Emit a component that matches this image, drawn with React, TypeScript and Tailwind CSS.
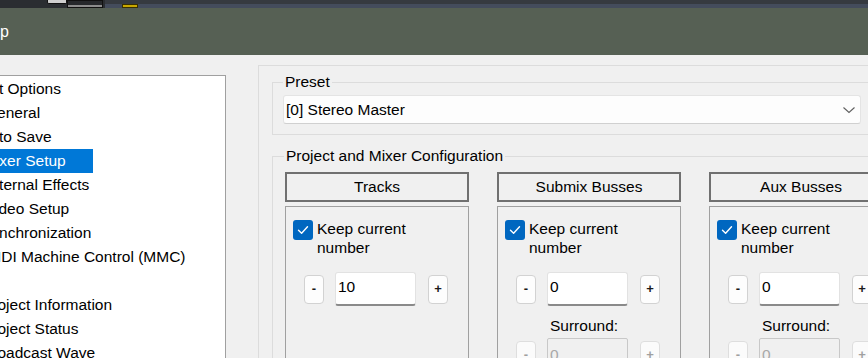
import React from "react";

const treeItems = [
  { label: "Project Options", cls: "-ml-[45px]" },
  { label: "General", cls: "-ml-[15px]" },
  { label: "Auto Save", cls: "-ml-[20px]" },
  { label: "Mixer Setup", cls: "-ml-[17px]", selected: true },
  { label: "External Effects", cls: "-ml-[19px]" },
  { label: "Video Setup", cls: "-ml-[15px]" },
  { label: "Synchronization", cls: "-ml-[19px]" },
  { label: "MIDI Machine Control (MMC)", cls: "-ml-[16px]" },
  { label: "", cls: "" },
  { label: "Project Information", cls: "-ml-[18px]" },
  { label: "Project Status", cls: "-ml-[18px]" },
  { label: "Broadcast Wave", cls: "-ml-[18px]" },
];

function Checkbox() {
  return (
    <div className="w-[20px] h-[20px] shrink-0 rounded-[3px] bg-[#0067c0] flex items-center justify-center">
      <svg width="14" height="14" viewBox="0 0 14 14">
        <polyline
          points="2.5,7.2 5.6,10.2 11.5,3.8"
          fill="none"
          stroke="white"
          strokeWidth="1.4"
          strokeLinecap="round"
          strokeLinejoin="round"
        />
      </svg>
    </div>
  );
}

function Counter({ value, disabled }: { value: string; disabled?: boolean }) {
  const btn = disabled
    ? "w-[20px] h-[29px] rounded-[4px] border border-[#dedede] bg-[#fbfbfb] text-[#a0a0a0] flex items-center justify-center text-[13px] font-bold"
    : "w-[20px] h-[29px] rounded-[4px] border border-[#d2d2d2] bg-[#fdfdfd] text-[#1a1a1a] flex items-center justify-center text-[13px] font-bold";
  return (
    <div className="flex items-center h-[34px] ml-[11px]">
      <div className={btn}>-</div>
      {disabled ? (
        <div className="ml-[11px] w-[81px] h-[34px] rounded-[2px] border border-[#c8c8c8] bg-[#f0f0f0] text-[#a8a8a8] pl-[2px] flex items-center">
          {value}
        </div>
      ) : (
        <div className="ml-[11px] w-[81px] h-[34px] rounded-[3px] border border-[#e2e2e2] border-b-2 border-b-[#8a8a8a] bg-white pl-[2px] pb-[3px] flex items-center">
          {value}
        </div>
      )}
      <div className={btn + " ml-[12px]"}>+</div>
    </div>
  );
}

function Column({ title, surround }: { title: string; surround?: boolean }) {
  return (
    <div className="w-[184px] shrink-0 flex flex-col">
      <div className="h-[30px] border-2 border-[#707070] flex items-center justify-center">
        {title}
      </div>
      <div className="mt-[4px] h-[200px] border border-[#a0a0a0] pt-[13px] pl-[7px]">
        <div className="flex items-start gap-[4px]">
          <Checkbox />
          <span className="w-[110px] leading-[19px] -mt-[1px]">Keep current number</span>
        </div>
        <div className="mt-[15px]">
          <Counter value={title === "Tracks" ? "10" : "0"} />
        </div>
        {surround && (
          <>
            <div className="ml-[45px] mt-[10px] leading-[19px]">Surround:</div>
            <div className="mt-[3px]">
              <Counter value="0" disabled />
            </div>
          </>
        )}
      </div>
    </div>
  );
}

export default function App() {
  return (
    <div className="w-[868px] h-[358px] overflow-hidden flex flex-col bg-[#f0f0f0] text-[15.5px] text-black font-['Liberation_Sans',Arial,sans-serif]">
      {/* host window strip */}
      <div className="h-[8px] flex shrink-0">
        <div className="w-[105px] bg-[#2a2d31] flex items-start">
          <div className="ml-[47px] w-[20px] h-[4px] bg-[#cfcfcf] border border-t-0 border-[#111] rounded-b-[2px]" />
          <div className="w-[36px] h-[8px] border border-[#111] flex flex-col">
            <div className="h-[4px] bg-[#26282b]" />
            <div className="flex-1 bg-[#8c8c8c]" />
          </div>
        </div>
        <div className="flex-1 flex flex-col">
          <div className="h-[4px] bg-[#363a40]" />
          <div className="h-[4px] bg-[#444c5c]">
            <div className="ml-[17px] w-[16px] h-[4px] bg-[#c9a800] border border-[#3a3000]" />
          </div>
        </div>
      </div>

      {/* title bar */}
      <div className="h-[47px] shrink-0 bg-[#566054] flex items-center text-white text-[16px] leading-[16px] overflow-hidden">
        <span className="-ml-[33px] whitespace-nowrap">Setup</span>
      </div>

      {/* dialog body */}
      <div className="flex-1 flex items-start">
        <div className="pt-[20px] shrink-0">
          <div className="w-[226px] h-[300px] bg-white border-t border-r border-[#a0a0a0] pt-[1px] overflow-hidden">
            {treeItems.map((item, i) =>
              item.selected ? (
                <div key={i} className="h-[24px] w-[93px] bg-[#0078d7] text-white flex items-center overflow-hidden">
                  <span className={"whitespace-nowrap " + item.cls}>{item.label}</span>
                </div>
              ) : (
                <div key={i} className="h-[24px] flex items-center overflow-hidden">
                  <span className={"whitespace-nowrap " + item.cls}>{item.label}</span>
                </div>
              )
            )}
          </div>
        </div>

        <div className="ml-[32px] mt-[10px] w-[700px] h-[300px] shrink-0 border-t border-l border-[#dcdcdc] pl-[13px] pt-[7px]">
          <fieldset className="w-[620px] border border-[#dcdcdc] pb-[10px]">
            <legend className="ml-[10px] px-[2px] leading-[18px]">Preset</legend>
            <div className="mt-[4px] ml-[10px] w-[578px] h-[29px] rounded-[3px] border border-[#e4e4e4] border-b-[#d0d0d0] bg-[#fdfdfd] flex items-center justify-between pl-[2px] pr-[4px]">
              <span>[0] Stereo Master</span>
              <svg width="14" height="8" viewBox="0 0 14 8">
                <polyline points="1.5,1.5 7,6.5 12.5,1.5" fill="none" stroke="#5f5f5f" strokeWidth="1.1" />
              </svg>
            </div>
          </fieldset>

          <fieldset className="mt-[12px] w-[640px] border border-[#dcdcdc] pb-[10px]">
            <legend className="ml-[11px] px-[2px] leading-[18px]">Project and Mixer Configuration</legend>
            <div className="mt-[7px] pl-[12px] flex gap-[28px]">
              <Column title="Tracks" />
              <Column title="Submix Busses" surround />
              <Column title="Aux Busses" surround />
            </div>
          </fieldset>
        </div>
      </div>
    </div>
  );
}
